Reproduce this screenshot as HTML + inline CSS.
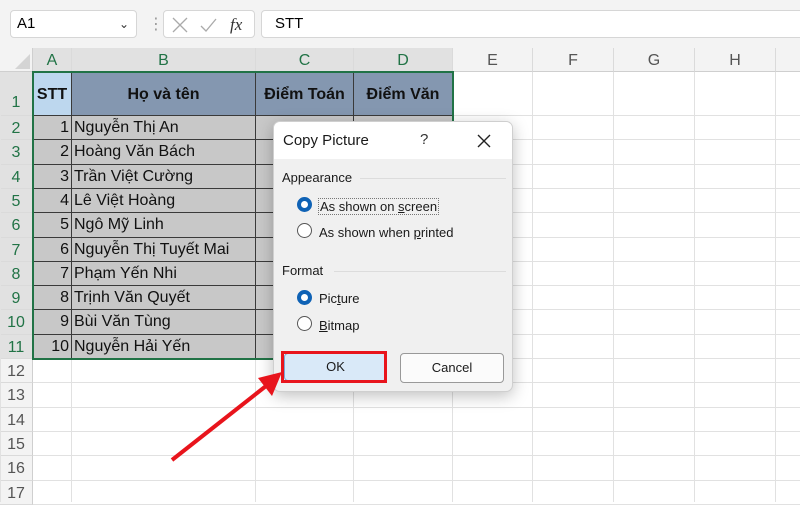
<!DOCTYPE html>
<html><head><meta charset="utf-8"><style>
*{margin:0;padding:0;box-sizing:border-box}
body{width:800px;height:502px;overflow:hidden;background:#fff;font-family:"Liberation Sans","DejaVu Sans",sans-serif;position:relative}
.a{position:absolute}
.top{left:0;top:0;width:800px;height:48px;background:#f3f3f3}
.box{background:#fff;border:1px solid #d6d6d6;border-radius:4px}
.ch{top:48px;height:24px;background:#f3f3f3;border-right:1px solid #dadada;border-bottom:1px solid #cfcfcf;text-align:center;font-size:16px;line-height:25px;color:#555}
.ch.s{background:#e1e1e1;color:#217346}
.rh{left:0;width:33px;background:#f3f3f3;border-bottom:1px solid #dadada;border-right:1px solid #cfcfcf;font-size:16px;color:#555;text-align:center}
.rh.s{background:#e1e1e1;color:#217346}
.vl{width:1px;background:#e1e1e1}
.hl{height:1px;background:#e1e1e1;left:33px;width:767px}
.c{background:#c8c8c8;border-right:1px solid #3a3a3a;border-bottom:1px solid #3a3a3a;font-size:16px;color:#111;line-height:24px;white-space:nowrap;overflow:hidden}
.h{background:#8497b0;border-right:1px solid #3a3a3a;border-bottom:1px solid #3a3a3a;font-weight:bold;font-size:16px;text-align:center;line-height:46px;color:#111}
.dlg{left:273px;top:121px;width:240px;height:271px;background:#f0f0f0;border:1px solid #cfcfcf;border-radius:7px;box-shadow:0 4px 16px rgba(0,0,0,.25);overflow:hidden;font-size:13px;color:#1a1a1a}
.rad{width:15px;height:15px;border-radius:50%;border:1px solid #555;background:#fff}
.rad.on{border:4px solid #0f62b5}
</style></head><body>
<div class="a top"></div>
<div class="a box" style="left:10px;top:10px;width:127px;height:28px;font-size:15px;line-height:26px;padding-left:6px">A1<span class="a" style="left:108px;top:0;font-size:12px;color:#333">&#8964;</span></div>
<div class="a" style="left:148px;top:14px;color:#999;font-size:16px">&#8942;</div>
<div class="a box" style="left:163px;top:10px;width:92px;height:28px">
<svg class="a" style="left:6px;top:5px" width="80" height="18"><path d="M3 2l14 14M17 2L3 16" stroke="#aaa" stroke-width="1.3" fill="none"/><path d="M31 10l5 5 10-12" stroke="#aaa" stroke-width="1.3" fill="none"/><text x="60" y="14" font-family="Liberation Serif" font-style="italic" font-size="17" fill="#333">fx</text></svg></div>
<div class="a box" style="left:261px;top:10px;width:560px;height:28px;font-size:15px;line-height:26px;padding-left:13px">STT</div>
<div class="a" style="left:0;top:48px;width:33px;height:24px;background:#f3f3f3;border-bottom:1px solid #cfcfcf;border-right:1px solid #cfcfcf"><svg width="33" height="24"><path d="M30 6L30 21 15 21Z" fill="#d4d4d4"/></svg></div>
<div id="g"></div>
<div class="a dlg">
<div class="a" style="left:0;top:0;width:240px;height:37px;background:#fff"></div>
<div class="a" style="left:9px;top:10px;font-size:15px">Copy Picture</div>
<div class="a" style="left:146px;top:9px;font-size:15px;color:#333">?</div>
<svg class="a" style="left:203px;top:12px" width="14" height="14"><path d="M1 1l12 12M13 1L1 13" stroke="#222" stroke-width="1.4"/></svg>
<div class="a" style="left:8px;top:48px">Appearance</div>
<div class="a" style="left:86px;top:56px;width:146px;height:1px;background:#dcdcdc"></div>
<div class="a rad on" style="left:23px;top:75px"></div>
<div class="a" style="left:44px;top:76px;border:1px dotted #777;padding:0 1px">As shown on <u>s</u>creen</div>
<div class="a rad" style="left:23px;top:101px"></div>
<div class="a" style="left:45px;top:103px">As shown when <u>p</u>rinted</div>
<div class="a" style="left:8px;top:141px">Format</div>
<div class="a" style="left:60px;top:149px;width:172px;height:1px;background:#dcdcdc"></div>
<div class="a rad on" style="left:23px;top:168px"></div>
<div class="a" style="left:45px;top:169px">Pic<u>t</u>ure</div>
<div class="a rad" style="left:23px;top:194px"></div>
<div class="a" style="left:45px;top:196px"><u>B</u>itmap</div>
<div class="a" style="left:10px;top:231px;width:103px;height:28px;background:#d9e9f8;border:1px solid #7aa7d6;border-radius:4px;text-align:center;line-height:26px">OK</div>
<div class="a" style="left:126px;top:231px;width:104px;height:30px;background:#fbfbfb;border:1px solid #999;border-radius:4px;text-align:center;line-height:28px">Cancel</div>
</div>
<div class="a" style="left:281px;top:351px;width:106px;height:32px;border:3px solid #e8141c"></div>
<svg class="a" style="left:0;top:0" width="800" height="502"><path d="M172 460L266 386" stroke="#e8141c" stroke-width="4"/><path d="M282 372L258 378 272 396Z" fill="#e8141c"/></svg>
<script>
var g=document.getElementById('g'),h='';
var cx=[33,72,256,354,453,533,614,695,776],L='ABCDEFGH';
for(var i=0;i<8;i++)h+='<div class="a ch'+(i<4?' s':'')+'" style="left:'+cx[i]+'px;width:'+(cx[i+1]-cx[i])+'px">'+L[i]+'</div>';
h+='<div class="a ch" style="left:776px;width:30px"></div>';
var ry=[72,116];for(var r=2;r<=18;r++)ry.push(116+Math.round((r-1)*24.3));
for(var r=1;r<=17;r++){var t=ry[r-1],b=ry[r];h+='<div class="a rh'+(r<=11?' s':'')+'" style="top:'+t+'px;height:'+(b-t)+'px;line-height:'+(r==1?62:26)+'px">'+r+'</div>';
h+='<div class="a hl" style="top:'+(b-1)+'px"></div>';}
for(var i=1;i<=9;i++)h+='<div class="a vl" style="left:'+(cx[i]-1)+'px;top:72px;height:430px"></div>';
var names=['Nguyễn Thị An','Hoàng Văn Bách','Trần Việt Cường','Lê Việt Hoàng','Ngô Mỹ Linh','Nguyễn Thị Tuyết Mai','Phạm Yến Nhi','Trịnh Văn Quyết','Bùi Văn Tùng','Nguyễn Hải Yến'];
h+='<div class="a h" style="left:33px;top:72px;width:39px;height:44px;background:#bdd7ee">STT</div>';
h+='<div class="a h" style="left:72px;top:72px;width:184px;height:44px">Họ và tên</div>';
h+='<div class="a h" style="left:256px;top:72px;width:98px;height:44px">Điểm Toán</div>';
h+='<div class="a h" style="left:354px;top:72px;width:99px;height:44px">Điểm Văn</div>';
for(var r=0;r<10;r++){var t=ry[r+1],hh=ry[r+2]-t;
h+='<div class="c a" style="left:33px;top:'+t+'px;width:39px;height:'+hh+'px;text-align:right;padding-right:2px">'+(r+1)+'</div>';
h+='<div class="c a" style="left:72px;top:'+t+'px;width:184px;height:'+hh+'px;padding-left:2px">'+names[r]+'</div>';
h+='<div class="c a" style="left:256px;top:'+t+'px;width:98px;height:'+hh+'px"></div>';
h+='<div class="c a" style="left:354px;top:'+t+'px;width:99px;height:'+hh+'px"></div>';}
h+='<div class="a" style="left:32px;top:71px;width:422px;height:'+(ry[11]-71+1)+'px;border:2px solid #217346"></div>';
g.innerHTML=h;
</script>
</body></html>
